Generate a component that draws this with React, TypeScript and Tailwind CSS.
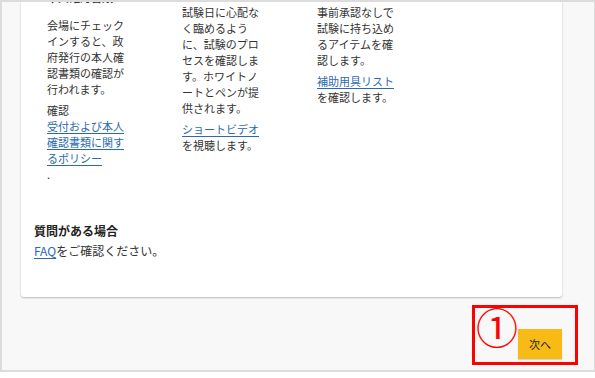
import React from 'react';

const columns = [
  {
    heading: '本人確認書類',
    paras: [
      { text: ['会場にチェックインすると、政府発行の本人確認書類の確認が行われます。'] },
      { pre: '確認', link: '受付および本人確認書類に関するポリシー', post: '.' },
    ],
  },
  {
    paras: [
      { text: ['試験日に心配なく臨めるように、試験のプロセスを確認します。ホワイトノートとペンが提供されます。'] },
      { link: 'ショートビデオ', post: 'を視聴します。' },
    ],
  },
  {
    paras: [
      { text: ['事前承認なしで試験に持ち込めるアイテムを確認します。'] },
      { link: '補助用具リスト', post: 'を確認します。' },
    ],
  },
];

export default function App() {
  return (
    <div
      className="w-[595px] h-[378px] bg-white text-[#333]"
      style={{ fontFamily: '"Noto Sans CJK JP", "Liberation Sans", sans-serif' }}
    >
      <div className="h-[372px] border-t-2 border-l-2 border-b-2 border-r border-[#dcdcdc] bg-[#f8f8f8] overflow-hidden flex flex-col">
        <div className="ml-[19px] w-[541px] bg-white rounded-b-[3px] shadow-[0_1px_2px_rgba(0,0,0,0.25)] pt-[2px] pb-[36px]">
          <div className="flex gap-[55px] pl-[26px] text-[11px] leading-[16px]">
            {columns.map((col, i) => (
              <div key={i} className="w-[80px] break-all">
                {col.heading && (
                  <div className="-mt-[15px] mb-[12px] font-bold">{col.heading}</div>
                )}
                {col.paras.map((p, j) => (
                  <div key={j} className="mb-[5px]">
                    {p.text && p.text.map((t, k) => <div key={k}>{t}</div>)}
                    {p.pre && <div>{p.pre}</div>}
                    {p.link && (
                      <div>
                        <a className="text-[#2a6aae] underline underline-offset-2">{p.link}</a>
                      </div>
                    )}
                    {p.post && <div>{p.post}</div>}
                  </div>
                ))}
              </div>
            ))}
          </div>
          <div className="mt-[34px] pl-[13px] text-[12px] leading-[20px]">
            <div className="font-bold text-[#222]">質問がある場合</div>
            <div>
              <a className="text-[#2a6aae] underline underline-offset-2">FAQ</a>をご確認ください。
            </div>
          </div>
        </div>
        <div className="flex justify-end pr-[16px] mt-[8px]">
          <div className="w-[106px] h-[60px] border-[3px] border-[#ff0000] flex justify-between items-end pl-[1px] pr-[13px] pb-[3px]">
            <span className="self-start -mt-[3px] text-[#ff0000] text-[42px] leading-[42px]">①</span>
            <button className="w-[45px] h-[30px] bg-[#f8bb16] text-[11px] text-[#222] shadow-[0_1px_1px_rgba(0,0,0,0.15)]">
              次へ
            </button>
          </div>
        </div>
      </div>
    </div>
  );
}
